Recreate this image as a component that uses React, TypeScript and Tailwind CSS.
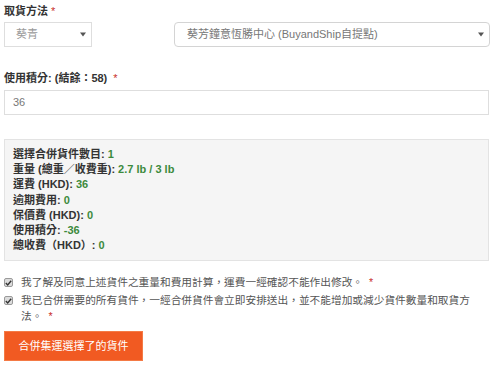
import React from "react";

const font = { fontFamily: '"Liberation Sans", "Noto Sans CJK TC", sans-serif' };

function Arrow() {
  return (
    <svg width="6" height="5" viewBox="0 0 6 5" className="shrink-0">
      <path d="M0 0.5 L6 0.5 L3 4.5 Z" fill="#555" />
    </svg>
  );
}

function Check() {
  return (
    <span className="mt-[4px] flex h-[9px] w-[9px] shrink-0 items-center justify-center rounded-[2px] border border-[#9a9a9a] bg-[#dcdcdc]">
      <svg width="7" height="6" viewBox="0 0 7 6">
        <path d="M0.8 3 L2.7 4.9 L6.2 0.8" fill="none" stroke="#333" strokeWidth="1.4" />
      </svg>
    </span>
  );
}

export default function App() {
  const rows: [string, string][] = [
    ["選擇合併貨件數目: ", "1"],
    ["重量 (總重／收費重): ", "2.7 lb / 3 lb"],
    ["運費 (HKD): ", "36"],
    ["逾期費用: ", "0"],
    ["保價費 (HKD): ", "0"],
    ["使用積分: ", "-36"],
    ["總收費（HKD）: ", "0"],
  ];
  return (
    <div className="w-[500px] h-[368px] bg-white pl-[4px] text-[11px]" style={font}>
      <div className="w-[486px]">
        <div className="h-[22px] leading-[22px] font-bold text-[#333]">
          取貨方法 <span className="text-[#c9302c] font-normal">*</span>
        </div>
        <div className="flex justify-between">
          <div className="flex h-[25px] w-[88px] items-center justify-between border border-[#dedede] bg-white pl-[11px] pr-[5px] text-[#999]">
            <span>葵青</span>
            <Arrow />
          </div>
          <div className="flex h-[25px] w-[316px] items-center justify-between rounded-[4px] border border-[#d4d4d4] bg-white pl-[12px] pr-[5px] text-[#777]">
            <span>葵芳鐘意恆勝中心 (BuyandShip自提點)</span>
            <Arrow />
          </div>
        </div>
        <div className="mt-[20px] h-[23px] leading-[23px] font-bold text-[#333]">
          使用積分: (結餘：58) <span className="ml-[3px] text-[#c9302c] font-normal">*</span>
        </div>
        <div className="flex h-[25px] w-[485px] items-center border border-[#dedede] bg-white pl-[8px] text-[#777]">
          36
        </div>
        <div className="mt-[24px] w-[485px] border border-[#e3e3e3] bg-[#f5f5f5] px-[8px] py-[7px] leading-[15.2px]">
          {rows.map(([k, v]) => (
            <div key={k} className="font-bold">
              <span className="text-[#333]">{k}</span>
              <span className="text-[#3c8a3c]">{v}</span>
            </div>
          ))}
        </div>
        <div className="mt-[13px] flex gap-[8px] text-[10.7px] leading-[16px] text-[#555]">
          <Check />
          <span>
            我了解及同意上述貨件之重量和費用計算，運費一經確認不能作出修改。<span className="ml-[6px] text-[#c9302c]">*</span>
          </span>
        </div>
        <div className="mt-[2px] flex gap-[8px] text-[10.7px] leading-[16px] text-[#555]">
          <Check />
          <span className="w-[455px]">
            我已合併需要的所有貨件，一經合併貨件會立即安排送出，並不能增加或減少貨件數量和取貨方法。<span className="ml-[6px] text-[#c9302c]">*</span>
          </span>
        </div>
        <div className="mt-[7px] flex h-[30px] w-[139px] items-center justify-center border border-[#f47a45] bg-[#f15a22] text-[11px] text-white">
          合併集運選擇了的貨件
        </div>
      </div>
    </div>
  );
}
